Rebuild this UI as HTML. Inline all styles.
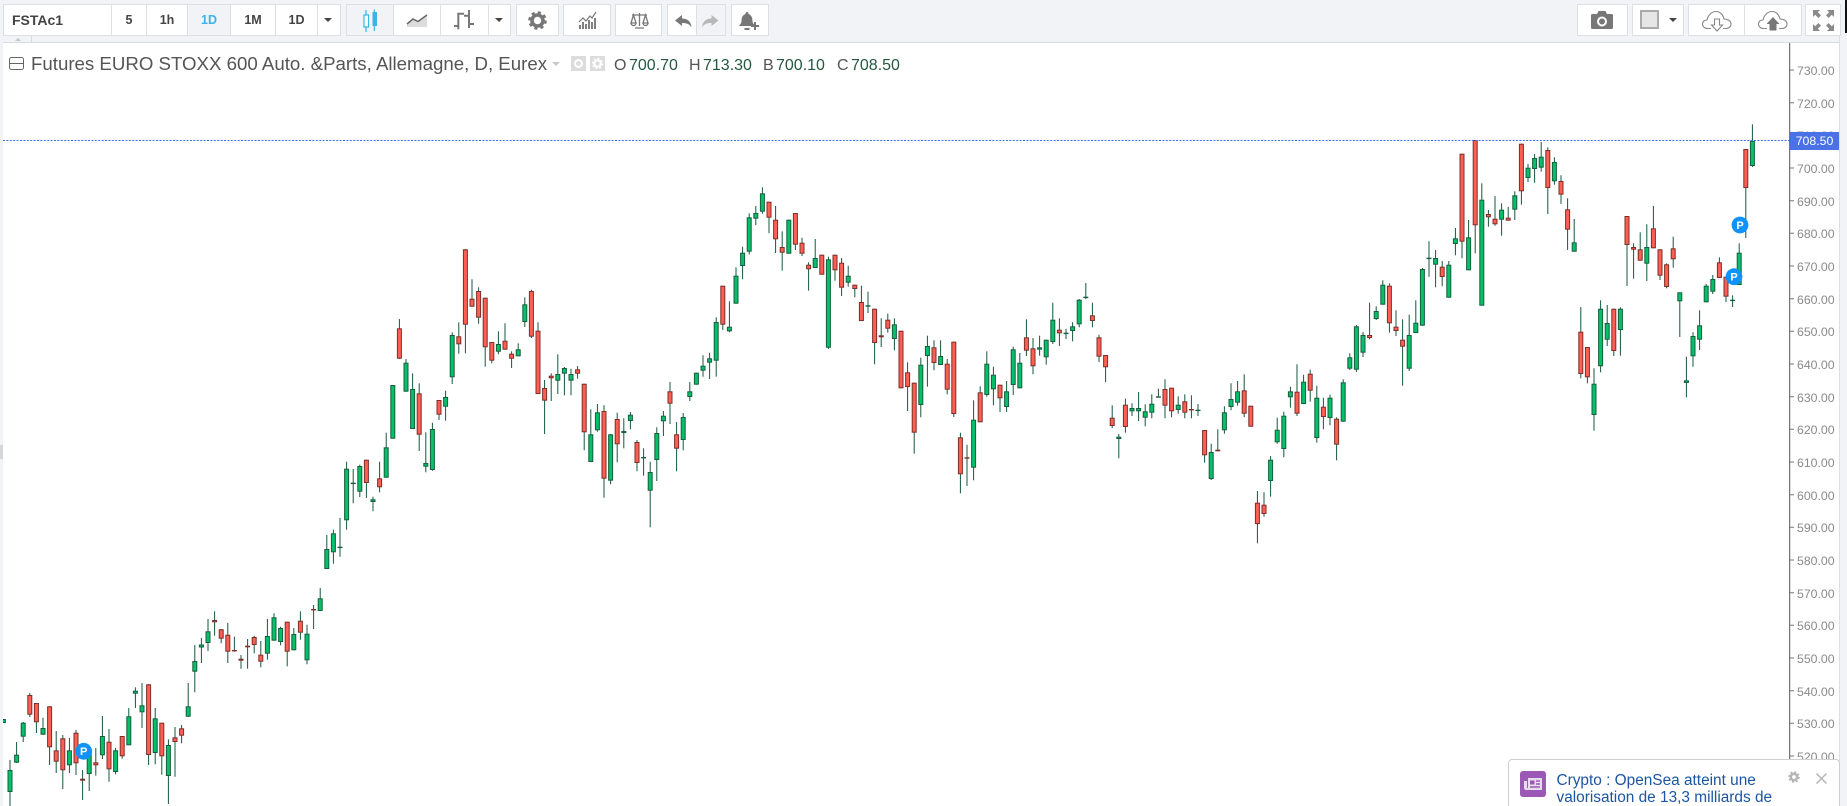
<!DOCTYPE html>
<html>
<head>
<meta charset="utf-8">
<style>
html,body{margin:0;padding:0;width:1847px;height:806px;overflow:hidden;background:#f1f3f7;font-family:"Liberation Sans",sans-serif}
.a{position:absolute}
#w{position:absolute;left:0;top:0;width:1847px;height:806px;overflow:hidden}
.b{position:absolute;top:4px;height:30px;background:#fff;border:1px solid #dcdfe4;box-sizing:content-box;text-align:center;line-height:31px;font-size:12.5px;font-weight:bold;color:#444}
.b.on{background:#f1f3f6;color:#3bb3e6}
.l{position:absolute;left:1797px;width:42px;height:16px;line-height:16px;font-size:12.3px;color:#8a8a8a;white-space:nowrap}
.t{position:absolute;white-space:nowrap;top:56px;height:20px;line-height:20px;font-size:16px;color:#555}
.t b{font-weight:normal;color:#24593f}
svg{position:absolute;overflow:visible}
</style>
</head>
<body>
<div id="w">
<!-- chart panel -->
<div class="a" style="left:3px;top:42px;width:1836px;height:764px;background:#fff;border-top:1px solid #d8dbe0"></div>
<div class="a" style="left:3px;top:36px;width:28px;height:6px;background:#f1f3f7;border-right:1px solid #d8dbe0"></div>
<div class="a" style="left:15px;top:38px;width:0;height:0;border-left:3px solid transparent;border-right:3px solid transparent;border-bottom:3px solid #c4c7cc"></div>

<!-- price line -->
<svg class="a" style="left:0;top:0" width="1847" height="806">
<g id="c"></g>
<path d="M3 140.5H1790" stroke="#3f6fe8" stroke-width="1" stroke-dasharray="2 1.4" fill="none"/>
<path d="M1789.7 43V806" stroke="#555" stroke-width="1" fill="none"/>
<path d="M1790 70h4M1790 102.7h4M1790 168h4M1790 200.7h4M1790 233.3h4M1790 266h4M1790 298.7h4M1790 331.3h4M1790 364h4M1790 396.7h4M1790 429.3h4M1790 462h4M1790 494.7h4M1790 527.3h4M1790 560h4M1790 592.7h4M1790 625.3h4M1790 658h4M1790 690.7h4M1790 723.3h4M1790 756h4" stroke="#777" stroke-width="1" fill="none"/>
<g font-family="Liberation Sans" font-weight="bold" font-size="11" text-anchor="middle">
<circle cx="83.7" cy="751.3" r="8.4" fill="#0f93fb"/><text x="83.7" y="755.2" fill="#fff">P</text>
<circle cx="1734" cy="276.7" r="8.4" fill="#0f93fb"/><text x="1734" y="280.6" fill="#fff">P</text>
<circle cx="1740" cy="225" r="8.4" fill="#0f93fb"/><text x="1740" y="228.9" fill="#fff">P</text>
</g>
</svg>

<!-- axis labels -->
<div class="l" style="top:63px">730.00</div>
<div class="l" style="top:96px">720.00</div>
<div class="l" style="top:128px">710.00</div>
<div class="l" style="top:161px">700.00</div>
<div class="l" style="top:194px">690.00</div>
<div class="l" style="top:226px">680.00</div>
<div class="l" style="top:259px">670.00</div>
<div class="l" style="top:292px">660.00</div>
<div class="l" style="top:324px">650.00</div>
<div class="l" style="top:357px">640.00</div>
<div class="l" style="top:390px">630.00</div>
<div class="l" style="top:422px">620.00</div>
<div class="l" style="top:455px">610.00</div>
<div class="l" style="top:488px">600.00</div>
<div class="l" style="top:520px">590.00</div>
<div class="l" style="top:553px">580.00</div>
<div class="l" style="top:586px">570.00</div>
<div class="l" style="top:618px">560.00</div>
<div class="l" style="top:651px">550.00</div>
<div class="l" style="top:684px">540.00</div>
<div class="l" style="top:716px">530.00</div>
<div class="l" style="top:749px">520.00</div>
<div class="a" style="left:1790px;top:132px;width:49px;height:18px;line-height:18px;background:#4a72e6;color:#fff;font-size:12.3px;text-align:center">708.50</div>

<!-- side strips -->
<div class="a" style="left:0;top:36px;width:3px;height:770px;background:#f1f3f7"></div>
<div class="a" style="left:0;top:445px;width:3px;height:14px;background:#d4d6da"></div>
<div class="a" style="left:1839px;top:36px;width:8px;height:770px;background:#f1f3f7;border-left:1px solid #dcdfe4;box-sizing:border-box"></div>
<div class="a" style="left:1845px;top:0;width:2px;height:33px;background:#111"></div>

<!-- title -->
<svg style="left:9px;top:57px" width="15" height="13"><rect x=".5" y=".5" width="14" height="12" rx="2" fill="none" stroke="#666"/><path d="M1 6.5H14" stroke="#666"/></svg>
<div class="t" style="left:31px;font-size:18.67px;top:54px;color:#555">Futures EURO STOXX 600 Auto. &amp;Parts, Allemagne, D, Eurex</div>
<div class="a" style="left:552px;top:62px;width:0;height:0;border-left:4px solid transparent;border-right:4px solid transparent;border-top:4px solid #c8c8c8"></div>
<svg style="left:571px;top:56px" width="34" height="15"><rect width="15" height="15" fill="#dcdcdc"/><rect x="19" width="15" height="15" fill="#dcdcdc"/><circle cx="7.5" cy="7.5" r="3.5" fill="none" stroke="#fff" stroke-width="2"/><circle cx="26.5" cy="7.5" r="3.2" fill="none" stroke="#fff" stroke-width="2.2"/><circle cx="26.5" cy="7.5" r="5" fill="none" stroke="#fff" stroke-width="1.4" stroke-dasharray="2 1.9"/></svg>
<div class="t" style="left:614px">O</div><div class="t" style="left:629px"><b>700.70</b></div>
<div class="t" style="left:689px">H</div><div class="t" style="left:703px"><b>713.30</b></div>
<div class="t" style="left:763px">B</div><div class="t" style="left:776px"><b>700.10</b></div>
<div class="t" style="left:837px">C</div><div class="t" style="left:851px"><b>708.50</b></div>

<!-- toolbar -->
<div class="b" style="left:3px;width:107px;text-align:left;text-indent:8px;font-size:14px">FSTAc1</div>
<div class="b" style="left:111px;width:34px">5</div>
<div class="b" style="left:146px;width:40px">1h</div>
<div class="b on" style="left:187px;width:42px">1D</div>
<div class="b" style="left:230px;width:44px">1M</div>
<div class="b" style="left:275px;width:41px">1D</div>
<div class="b" style="left:317px;width:22px"></div>
<div class="a" style="left:324px;top:18px;width:0;height:0;border-left:4px solid transparent;border-right:4px solid transparent;border-top:4px solid #444"></div>

<div class="b on" style="left:346px;width:46px"></div>
<div class="b" style="left:393px;width:46px"></div>
<div class="b" style="left:440px;width:47px"></div>
<div class="b" style="left:488px;width:21px"></div>
<div class="a" style="left:495px;top:18px;width:0;height:0;border-left:4px solid transparent;border-right:4px solid transparent;border-top:4px solid #444"></div>
<svg style="left:363px;top:9px" width="14" height="24" fill="none"><path d="M3 1V23M11.300 .5V22" stroke="#3bb3e6" stroke-width="1.200"/><rect x="1" y="6" width="4.500" height="12" fill="#fff" stroke="#3bb3e6" stroke-width="1.200"/><rect x="9.500" y="3" width="4.500" height="14" fill="#3bb3e6"/></svg>
<svg style="left:407px;top:13px" width="21" height="15"><path d="M0 14V11L6 6L11 8.500L20 2V14Z" fill="#dcdcdc"/><path d="M0 11L6 6L11 8.500L20 2" fill="none" stroke="#666" stroke-width="1.500"/></svg>
<svg style="left:454px;top:9px" width="20" height="22" fill="none" stroke="#777" stroke-width="2"><path d="M4.300 3.700V20.300M0 17H4.300M4.300 4.700H10M15 1V19M10 6.700H15M15 15H20"/></svg>

<div class="b" style="left:516px;width:41px"></div>
<svg style="left:528px;top:11px" width="19" height="19" fill="none" stroke="#777"><circle cx="9.500" cy="9.500" r="5.500" stroke-width="3.600"/><circle cx="9.500" cy="9.500" r="8" stroke-width="2.600" stroke-dasharray="3.200 3.080"/></svg>

<div class="b" style="left:563px;width:46px"></div>
<svg style="left:578px;top:12px" width="19" height="18" fill="none"><path d="M1 10L5 6L8 9L12 4L14 6L18 0" stroke="#777" stroke-width="1.200"/><path d="M2 13V17M5 10V17M8 12V17M11 8V17M14 10V17M17 6V17" stroke="#808080" stroke-width="2"/></svg>

<div class="b" style="left:615px;width:45px"></div>
<svg style="left:630px;top:12px" width="19" height="17" fill="none" stroke="#777" stroke-width="1.300"><path d="M9.500 1V14M2 3H17M5 16H14"/><path d="M3.500 3L1 11H6ZM15.500 3L13 11H18Z"/><path d="M1 11A2.500 2.500 0 0 0 6 11M13 11A2.500 2.500 0 0 0 18 11"/></svg>

<div class="b" style="left:667px;width:28px"></div>
<div class="b on" style="left:696px;width:28px"></div>
<svg style="left:675px;top:15px" width="17" height="13"><path d="M0 5.500L7 0V3.500C12 3.500 16 6 16.500 12.500C14.500 9 12 8 7 8V11Z" fill="#777"/></svg>
<svg style="left:702px;top:15px" width="17" height="13"><path d="M16.500 5.500L9.500 0V3.500C4.500 3.500 .5 6 0 12.500C2 9 4.500 8 9.500 8V11Z" fill="#b8b8b8"/></svg>

<div class="b" style="left:731px;width:36px"></div>
<svg style="left:739px;top:12px" width="21" height="19"><path d="M8 0C9 0 9.500 1 9.500 2C12.500 3 13.500 6 13.500 9C13.500 11 15 12.500 16 14H0C1 12.500 2.500 11 2.500 9C2.500 6 3.500 3 6.500 2C6.500 1 7 0 8 0Z" fill="#777"/><path d="M5.500 16H10.500V18H5.500Z" fill="#777"/><path d="M16 10V18M12 14H20" stroke="#777" stroke-width="2" fill="none"/></svg>

<div class="b" style="left:1577px;width:49px"></div>
<svg style="left:1591px;top:11px" width="22" height="18"><path d="M1.500 3H6L7.500 0H14.500L16 3H20.500Q22 3 22 4.500V16.500Q22 18 20.500 18H1.500Q0 18 0 16.500V4.500Q0 3 1.500 3Z" fill="#777"/><circle cx="11" cy="10.500" r="4" fill="none" stroke="#fff" stroke-width="2"/></svg>
<div class="b" style="left:1632px;width:50px"></div>
<div class="a" style="left:1640px;top:10px;width:15px;height:15px;background:#e6e6e6;border:2px solid #aaa"></div>
<div class="a" style="left:1669px;top:18px;width:0;height:0;border-left:4px solid transparent;border-right:4px solid transparent;border-top:4px solid #444"></div>
<div class="b" style="left:1688px;width:55px"></div>
<div class="b" style="left:1744px;width:56px"></div>
<svg style="left:1702px;top:11px" width="30" height="20" fill="none" stroke="#888" stroke-width="1.100"><path d="M9 17.500H6C2.500 17.500 .5 15.500 .5 13C.5 10.500 2.500 9 5 9C6 4 10 .5 14 .5C18 .5 21 3.500 22 8C26 8 29 10 29 13C29 15.500 27 17.500 24 17.500H21"/><path d="M12.500 8V14H9.500L15 20L20.500 14H17.500V8Z" fill="#fff"/></svg>
<svg style="left:1758px;top:11px" width="30" height="20" fill="none" stroke="#888" stroke-width="1.100"><path d="M9 17.500H6C2.500 17.500 .5 15.500 .5 13C.5 10.500 2.500 9 5 9C6 4 10 .5 14 .5C18 .5 21 3.500 22 8C26 8 29 10 29 13C29 15.500 27 17.500 24 17.500H21"/><path d="M8.500 13L15 6L21.500 13H18.500V19.500H11.500V13Z" fill="#777" stroke="none"/></svg>
<div class="b" style="left:1805px;width:34px"></div>
<svg style="left:1813px;top:10px" width="21" height="21" fill="#8a8a8a"><path d="M0 0H7L4.800 2.200L8 5.400L5.400 8L2.200 4.800L0 7ZM21 0V7L18.800 4.800L15.600 8L13 5.400L16.200 2.200L14 0ZM0 21V14L2.200 16.200L5.400 13L8 15.600L4.800 18.800L7 21ZM21 21H14L16.200 18.800L13 15.600L15.600 13L18.800 16.200L21 14Z"/></svg>

<!-- notification -->
<div class="a" style="left:1508px;top:759px;width:330px;height:60px;background:#fff;border:1px solid #cfcfcf;border-radius:4px;box-sizing:content-box"></div>
<svg style="left:1520px;top:771px" width="26" height="26"><rect width="26" height="26" rx="3" fill="#9b59b6"/><path d="M8 7H22V19H6Q4 19 4 17V10H7V17H8Z" fill="#e9dcef"/><rect x="10" y="9.500" width="4.500" height="4" fill="#9b59b6"/><path d="M16 10H20M16 13H20M10 16H20" stroke="#9b59b6" stroke-width="1.400"/></svg>
<div class="a" style="left:1556.500px;top:772px;font-size:15.4px;line-height:17px;color:#1c55a0;white-space:nowrap">Crypto : OpenSea atteint une<br>valorisation de 13,3 milliards de</div>
<svg style="left:1788px;top:771px" width="12" height="12" fill="none" stroke="#b5b5b5"><circle cx="6" cy="6" r="3.200" stroke-width="2.600"/><circle cx="6" cy="6" r="5" stroke-width="1.600" stroke-dasharray="2 1.930"/></svg>
<svg style="left:1816px;top:773px" width="11" height="11" stroke="#b5b5b5" stroke-width="1.500"><path d="M.5 .5L10.500 10.500M10.500 .5L.5 10.500"/></svg>
</div>
<script>
var d="g 719 719 723 723;g 760 770 792 810;g 742 754.7 762.7 763;g 722 722.7 736.7 742;r 693 695 714.7 717;r 703 703 722.3 733;g 717.7 728 734.7 735;r 706 706.3 747.3 765;r 731 750.3 761.7 773;r 735 738.3 770.3 789;g 738 750.3 765.3 773;r 730 732.7 763.3 775;r 770 778.7 780.7 800;g 748 752 774 791;r 748 762.3 765.3 775.7;g 716 736 755.3 759;r 729 741.7 769.3 781.7;g 748 750.3 772 774.3;r 736 736 756.3 758.7;g 708 716.3 745.3 745;g 687.3 690.7 693.7 708;g 683 705.3 712.3 728;r 684 684.3 755 765;g 708 718.3 753 764.3;r 722.7 722.7 756.3 774.7;g 739.3 745 776 804;r 727 737.3 742 776.7;r 725 728.3 735.7 743.3;g 683 706.3 716.7 717;g 645 661 671.7 692.3;g 638 644.5 647.5 663;g 619 631.3 643 651;r 611.3 620 622.3 635.7;r 629 629.3 638.7 643.3;r 623 634.7 651.7 663;r 636.7 650 651.3 651.7;r 655 658.7 660.7 668.7;r 639 645.7 647.3 668.7;r 635.7 637 645 653.3;r 641 654.7 661.7 667.3;g 619 636 653.7 659.7;g 613.3 617.3 640.7 640.7;g 626.7 628 642 645.3;r 621.7 621.7 651.7 666.3;g 628 634 650.3 650.3;r 611.3 620.7 632.7 639.7;g 624.7 633.7 660.3 664.3;r 605 609 610.3 629;g 588 598.3 611 611;g 535 549 569 569;g 529.7 533.3 552.3 563.7;g 518 546.7 548 556.7;g 461.7 468.7 520.3 529.7;g 469 482.7 484 503.3;g 464.7 466 491.7 497;r 459.7 459.7 483 498;g 496.7 499.3 502 511.3;r 461.7 478.3 487.3 492.3;g 432.7 447.3 477.7 477.7;g 385 385 438.7 438.7;r 319 328.3 358.7 359;g 359 362.7 391.7 391.7;g 373.3 389 429 429;r 383.3 393.3 434.7 451;g 432.3 463 466.7 472.3;g 422.7 429 470 470.7;r 400 400 414.7 420;g 390.7 397 406.7 420.7;g 332.3 335 377.3 384;r 322.3 336.3 344.3 353.7;r 249 249.3 324.7 353.3;r 279.3 298.7 306.7 306.7;r 287.3 291 317.7 323.7;r 297.7 297.7 347.3 366.7;r 342 342 360.7 363.3;g 331.3 344 351.7 354.3;r 323.3 340.7 349.7 349.7;r 351.3 353.7 358.7 368;g 343.3 349.3 356.3 356.3;g 297.3 304.3 322 327;r 289.7 291 336.7 338;r 322.3 330.7 394 394;r 380 388 400.7 434;r 373.3 375.7 378.3 401;g 354.3 374 380.7 394;g 367 368 373.7 395.3;g 368.7 374 380.7 395.3;r 366 369.3 373.7 378.7;r 383.7 383.7 432.3 450.3;g 409.3 434.3 462 462;g 404 412.3 430.3 431.7;r 405.3 411 478.7 497.7;g 434 434.3 480.7 484.3;r 412.7 419 444.3 462.3;g 418.3 431 433 448.3;g 412 414.7 421 429.3;r 440 442 463 471.3;g 448.3 457 458 475.7;g 461.7 472 490.7 527.3;g 427.3 433 460 481;g 411 415.7 421.3 436;r 382 391.3 403.7 424;r 422 434.3 448.7 471.3;g 413 417 440 450.3;g 382 391.3 397 401;g 372.7 372.7 384.7 384.7;g 355.3 365.7 370.7 376.7;g 352.7 358.3 362.7 379;g 317.3 322 360.7 376.7;r 285.7 285.7 324.7 330;g 301.3 326.7 331.3 332.3;g 267.3 275.7 303.7 303.7;g 246.7 252.7 266 279.3;g 213.3 217.3 251.7 254.3;g 206 213 218.7 225;g 187.3 193.3 211.7 213.7;r 201.7 201.7 217.7 233.3;r 206 219.7 239.3 253;r 231.3 247 252.7 270.7;g 219.7 219.7 253.7 253.7;r 213 213 244.7 250;r 237.7 242.7 253.7 256;r 262.3 264.7 269.3 290.7;g 239 258 268 268;r 254.7 254.7 274.7 274.7;g 256.7 259.3 347.7 349;r 254.7 254.7 270.3 280.7;r 258 262.7 287.7 296;g 265.7 275.7 282.7 286.7;r 284.7 284.7 289 297.3;r 285.7 302 321 321;g 291.7 305.3 306.7 313;r 308.7 308.7 343 364.3;r 318.3 335.3 337.3 347;r 313.7 319.7 328.7 332.7;g 318.3 324.3 339 350.3;r 330.7 330.7 388.3 388.3;r 362.3 372.3 387 411;r 382.7 382.7 432.7 453.7;g 357.7 364.7 405 417.3;g 335.7 346 356 386.7;r 340.3 347.3 363 370.3;g 340.3 356 365 365;r 359 363.7 389.7 394.3;r 341.7 341.7 414 417;r 432.7 437.3 474.3 493.3;r 444.7 457.3 458.7 486;g 400.3 419.7 467.7 480.3;r 386.3 392.3 422.3 422.3;g 351.3 363.7 395 396.7;g 366.7 374.7 389.3 405.3;r 384.7 384.7 398.3 412;g 381 391.3 407 412;g 346.7 349.3 385 395;g 353 362.7 388.3 388.3;r 319.3 337.3 350.7 356;r 338 348.3 366.3 374.3;g 335.7 347.3 349.7 355.7;g 339.7 339.7 357.3 364.7;g 302.7 319.7 342 344;r 318.3 329.7 333.3 346;g 328.7 332.7 334 339;g 322.3 326.3 331 341.3;g 299 299.7 324.3 327.3;g 283 296.7 298 299;r 302.7 315.3 321 327.3;r 334.7 337.3 356.7 362;r 355 355 367.3 382;r 405.3 417.7 426 428;g 434 436.7 439 458.3;r 398.7 404.7 427 432.7;g 403.3 408 411.3 416;g 392 408 411.3 421;g 404.3 411.3 417.7 426.3;g 394.3 403.7 412.7 418.3;g 388.7 396.3 397.3 397.3;r 379.3 389 405.7 418.3;r 387.7 387.7 411.3 417.3;g 396.3 404.7 410 413.7;r 394.3 401.3 412.7 418.3;r 395.3 409 410.3 418.3;g 404 409.7 410.7 416;r 430 430 455.3 462.7;g 443.7 452 479 480;r 429.3 449.7 451.3 451.3;g 406.3 412.3 430.3 433.7;g 383.3 399 407 410.3;g 381 391.3 402.7 405.7;r 374.3 390.3 413.7 417;r 405.7 405.7 426.7 426.7;r 491 502.7 524 543.3;r 492.3 504.7 514 516.7;g 456 459.7 481 496.7;g 417.7 429.7 442.3 443.7;g 411.7 415.7 449 457.3;g 386.7 391.3 397.3 407.7;r 364.3 391.7 413.7 416;g 374.7 381.7 404 404;r 369.7 373.7 390.7 401.7;g 385.7 397.7 438 442.7;r 397.7 406.7 417 429.3;g 394.7 397.7 418 425.3;r 417.3 418.7 444.7 460.3;g 379.3 382.3 421.7 421.7;g 353.3 357.3 368.7 370;g 325 326.3 369.7 372;g 332 335 352.7 357;r 302.7 335 338 339.3;g 306.3 311 319 320;g 280.3 284.7 304.7 304.7;r 283.3 285.7 323.3 332.7;r 310.3 326.7 331 336;r 319.3 339.7 346.7 385.7;g 314.7 335 368.7 371;g 300.3 322.7 333 333;g 268 269 325.7 325.7;g 241.3 257.7 258.7 276.7;g 250 258 264.7 287.3;r 261 266.7 277 286.3;g 261 264.7 297.7 297.7;g 228 238.3 244 255.3;r 153.7 153.7 241.7 258.3;g 220 237.3 270.3 270.3;r 140 140 225.3 253.3;g 183.3 199.7 305.7 305.7;r 210 214 217.3 226.7;r 196 218.7 224.3 225.7;g 203.3 209.7 219.7 235.7;r 207 217.7 220.7 220.7;g 191.3 195.3 209.7 220;r 143.7 143.7 191.3 204.7;g 164 167.7 178 182;g 154 158 169 182.7;g 142 156.7 167.7 171.7;r 147.3 150 188 214;g 157.3 162 181.3 184.7;r 175.3 181 194.7 204;r 198.3 209.3 229.7 250;g 219 242.3 251.7 251.7;r 307 331.7 374 378.3;r 347 347 377.3 383.3;g 368.3 383.7 415 430.7;g 300.3 308.7 366.3 372.3;g 305 323 339.7 346;r 308.7 308.7 351 356;g 307.3 308.7 330 355.7;r 216 216 245 286;r 243.3 247 249.7 278.7;r 232.3 249.3 260.7 260.7;g 224.3 247 263.7 281;r 206 228.3 248.3 248.3;r 249.3 249.3 275.7 280;r 263.3 264.3 287 288.3;r 236.7 248.3 259.3 267.7;g 292.3 292.3 301.3 337;g 356.7 380.3 383 397.3;g 332.3 336 356.3 366.7;g 310.3 325.3 339.7 350;g 284 285.7 302.3 302.3;g 275 279 291.7 294;r 257.3 262.3 278 278;r 276.7 276.7 296.7 302;g 295.3 299.7 300.7 307;g 243.3 252.7 285 285;r 149 149 188 238;g 124.3 140.7 166 167".split(";");
var s="";
for(var i=0;i<d.length;i++){
  var p=d[i].split(" "),x=3.4+6.6*i,g=p[0]=="g",t=+p[1],a=+p[2],b=+p[3],e=+p[4];
  var st=g?"#13603f":"#7b2f2a",fi=g?"#07bf68":"#ff5f52",wc="#14583c";
  if(e>t)s+='<path d="M'+x.toFixed(1)+' '+t+'V'+e+'" stroke="'+wc+'" stroke-width="1" fill="none"/>';
  s+='<rect x="'+(x-2).toFixed(1)+'" y="'+(a+.5).toFixed(1)+'" width="4" height="'+Math.max(b-a-1,.4).toFixed(1)+'" fill="'+fi+'" stroke="'+st+'" stroke-width="1"/>';
}
document.getElementById("c").innerHTML=s;
</script>
</body>
</html>
